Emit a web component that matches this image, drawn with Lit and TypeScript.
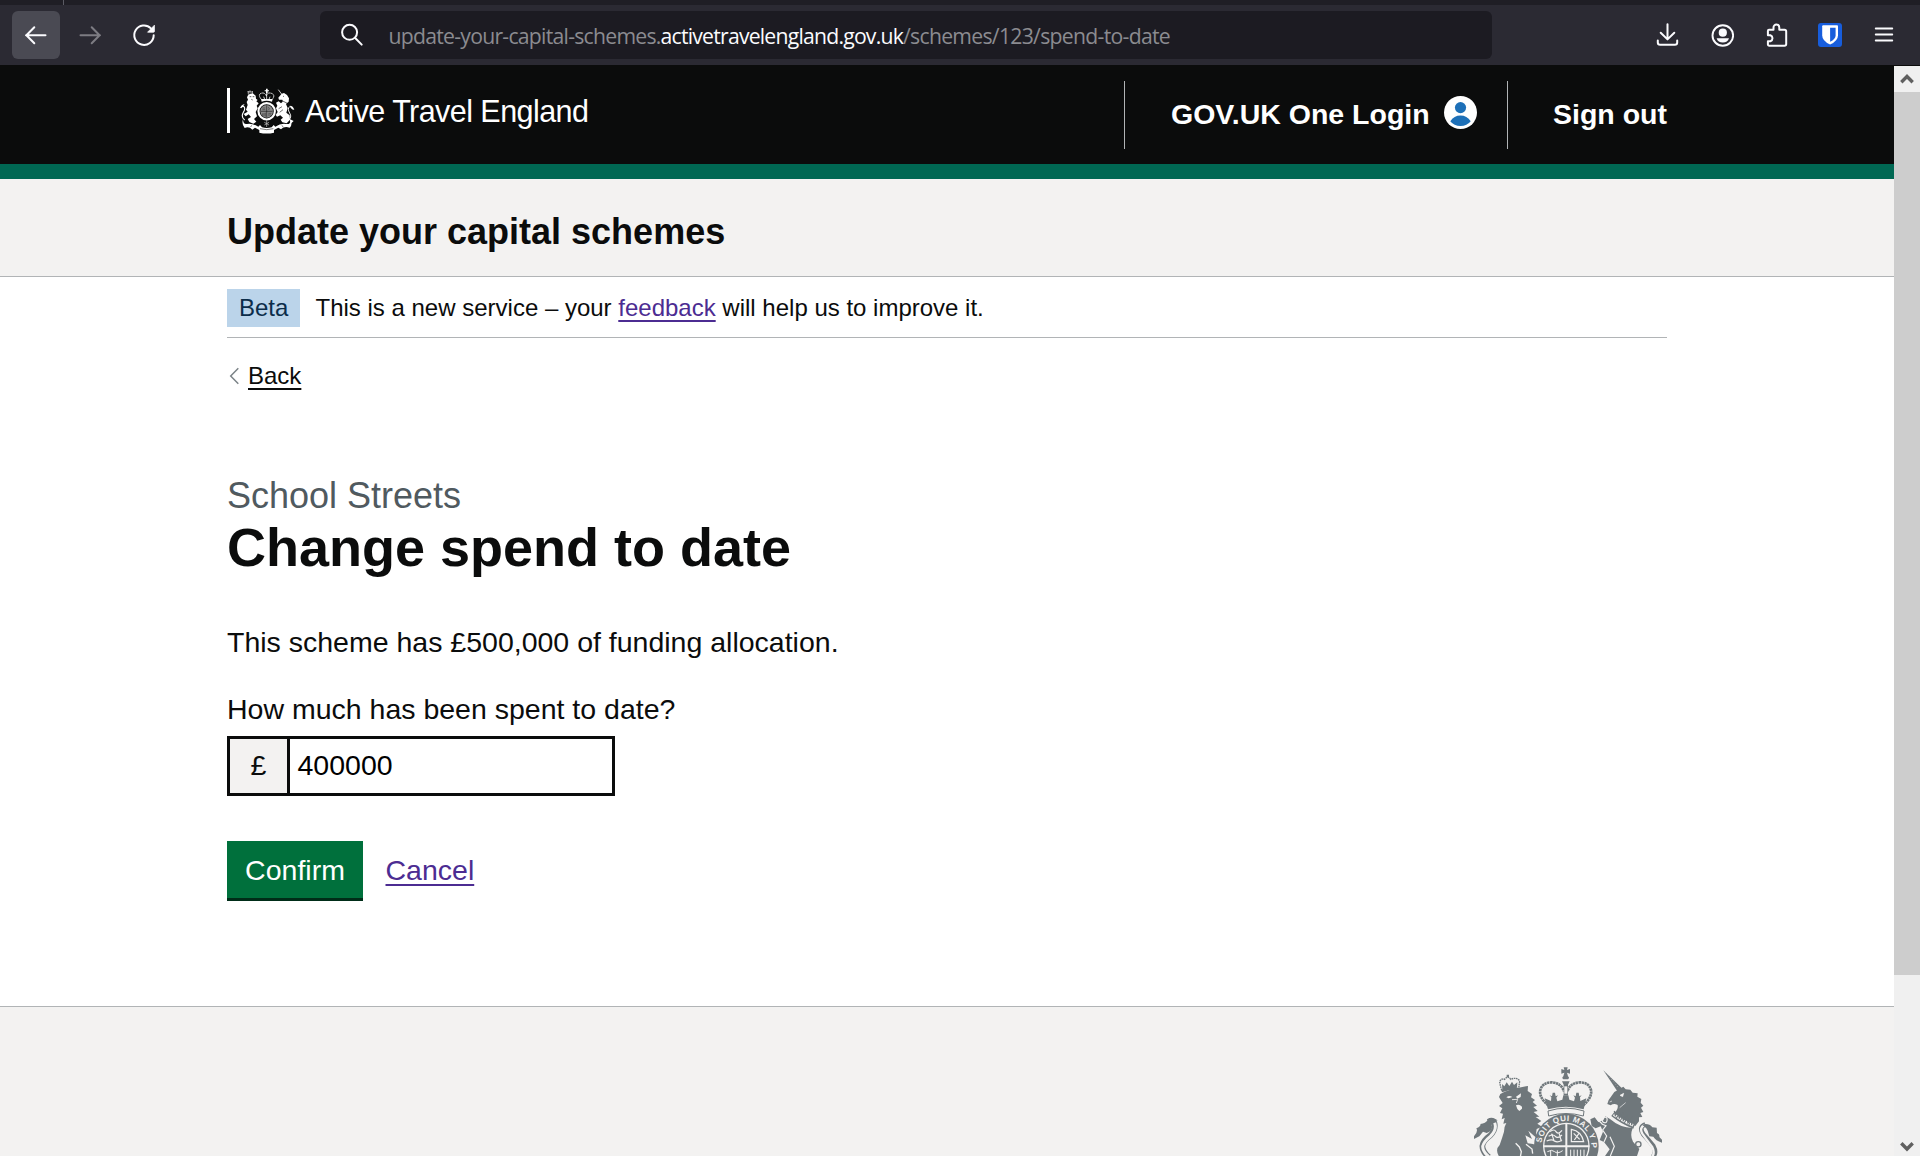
import { LitElement, html, css, svg } from "lit";
import { customElement, property } from "lit/decorators.js";

const line = (d: string) =>
  svg`<path d=${d} fill="none" stroke="currentColor" stroke-width="2" stroke-linecap="round" stroke-linejoin="round"></path>`;

const ICONS: Record<string, unknown> = {
  back: line("M2 12.3H21.5M10.3 4.3L2.4 12.3L10.3 20.3"),
  forward: line("M2.5 12.3H22M13.7 4.3L21.6 12.3L13.7 20.3"),
  reload: svg`<path d="M18.9 5.4A9.7 9.7 0 1 0 21.7 12.3" fill="none" stroke="currentColor" stroke-width="2" stroke-linecap="round"></path>
    <path d="M22.4 2.2V8.4a.8.8 0 0 1-.8.8H15.6Z" fill="currentColor" stroke="currentColor" stroke-width=".8" stroke-linejoin="round"></path>`,
  search: svg`<circle cx="9.6" cy="9.3" r="7.5" fill="none" stroke="currentColor" stroke-width="2"></circle>${line("M15.2 15L21.7 21.6")}`,
  download: line("M11.5 1.2V16M4.7 9.8L11.5 16.4L18.3 9.8M1.8 17.5V19.5Q1.8 21.8 4.1 21.8H18.9Q21.2 21.8 21.2 19.5V17.5"),
  account: svg`<circle cx="12.8" cy="12.5" r="10.3" fill="none" stroke="currentColor" stroke-width="1.9"></circle>
    <circle cx="12.8" cy="9.7" r="4.1" fill="currentColor"></circle>
    <path d="M6.6 15.2H19Q17.6 19.6 12.8 19.6T6.6 15.2Z" fill="currentColor"></path>`,
  puzzle: line("M3.9 11.3V7.9Q3.9 6.8 5 6.8H9.5V4.4A2.9 2.9 0 0 1 15.3 4.4V6.8H20.5Q22.2 6.8 22.2 8.5V21Q22.2 22.7 20.5 22.7H5Q3.9 22.7 3.9 21.6V18.2H6.4A3.2 3.2 0 0 0 6.4 12.2H3.9Z"),
  shield: svg`<rect x="0" y="0" width="24" height="24" rx="3" fill="#175ddc"></rect>
    <path d="M4.2 3.2Q4.2 2.3 5.1 2.3H19.1Q20 2.3 20 3.2V12.4Q20 17.6 12.1 21.6Q4.2 17.6 4.2 12.4Z" fill="#fff"></path>
    <path d="M12.1 4.8H17.6V12.4Q17.6 15.9 12.1 18.8Z" fill="#175ddc"></path>`,
  menu: svg`<path d="M3.8 5.5H20.2M3.8 11.5H20.2M3.8 17.6H20.2" stroke="currentColor" stroke-width="2" stroke-linecap="round"></path>`,
};

@customElement("tool-icon")
export class ToolIcon extends LitElement {
  @property() name = "menu";
  static styles = css`
    :host { display: flex; width: 48px; height: 48px; align-items: center; justify-content: center; border-radius: 6px; flex: none; }
    svg { width: 24px; height: 24px; display: block; }
  `;
  render() {
    return html`<svg viewBox="0 0 24 24">${ICONS[this.name]}</svg>`;
  }
}

@customElement("browser-bar")
export class BrowserBar extends LitElement {
  static styles = css`
    :host { display: block; color: #fbfbfe; }
    .tabs { height: 5px; background: #1f1e25; display: flex; }
    .tabsep { width: 1px; height: 5px; margin-left: 63px; background: #5b5b64; }
    .bar { height: 60px; box-sizing: border-box; padding: 0 12px; background: #2b2a33; display: flex; gap: 6px; align-items: center; }
    .on { background: #4a4a53; }
    .off { color: #7d7c83; }
    .url { width: 1172px; height: 48px; margin-left: 146px; border-radius: 6px; background: #1c1b22; display: flex; align-items: center; box-sizing: border-box; padding-left: 7.5px; }
    .addr { display: flex; margin: 2px 0 0 13px; color: #8b8b90; font: 21.2px/30px "Open Sans", "Noto Sans", sans-serif; white-space: pre; }
    .dim { letter-spacing: -0.74px; }
    .host { color: #fbfbfe; letter-spacing: -0.78px; }
    .tail { letter-spacing: -0.71px; }
    .tools { margin-left: auto; display: flex; gap: 6px; }
  `;
  render() {
    return html`
      <div class="tabs"><div class="tabsep"></div></div>
      <div class="bar">
        <tool-icon class="on" name="back"></tool-icon>
        <tool-icon class="off" name="forward"></tool-icon>
        <tool-icon name="reload"></tool-icon>
        <div class="url">
          <tool-icon name="search"></tool-icon>
          <div class="addr"><span class="dim">update-your-capital-schemes.</span><span class="host">activetravelengland.gov.uk</span><span class="tail">/schemes/123/spend-to-date</span></div>
        </div>
        <div class="tools">
          ${["download", "account", "puzzle", "shield", "menu"].map((n) => html`<tool-icon name=${n}></tool-icon>`)}
        </div>
      </div>
    `;
  }
}

@customElement("small-crest")
export class SmallCrest extends LitElement {
  static styles = css`
    :host { display: block; width: 55px; height: 46px; }
    svg { display: block; width: 55px; height: 46px; }
  `;
  render() {
    return html`<svg viewBox="90 52 165 138" fill="#fff">
      <path d="M168 54h5v5h4v3h-4v5h-5v-5h-4v-3h4z"></path>
      <path d="M154 86Q143 72 153 68Q164 64 169 76Q172 64 184 68Q197 72 187 86" fill="none" stroke="#fff" stroke-width="3" stroke-dasharray="3.5 1"></path>
      <path d="M170 67V86M161 78l3 8M180 78l-3 8" stroke="#fff" stroke-width="2.4"></path>
      <path d="M153 85H188L186 93Q170 88 155 93Z"></path>
      <circle cx="170" cy="122" r="24.5" fill="#0b0c0c" stroke="#fff" stroke-width="6.5"></circle>
      <circle cx="170" cy="122" r="19" fill="#8a8a8a"></circle>
      <path d="M170 104V140M152 122H188" stroke="#0b0c0c" stroke-width="1.6"></path>
      <path d="M157 112h9M157 117h9M174 110q7 2 2 8M158 128v8M162 127v10M166 126v12M175 128h9M174 133h9" stroke="#2a2a2a" stroke-width="1.6" fill="none"></path>
      <path d="M114 61l3 5 3-6 3 6 4-5 1 9-13 1z" fill="none" stroke="#fff" stroke-width="1.8"></path>
      <path d="M114 74Q120 68 130 69L137 75L138 84L143 88L139 92L146 98L140 105L143 113L137 124L141 137L132 145L139 153L130 159L118 154L113 145L123 139L116 131L107 137L101 130L113 123L108 117L113 103L110 94L114 87L111 80Z"></path>
      <path d="M119 78h5M128 78h5M124 86l4 2" stroke="#0b0c0c" stroke-width="2"></path>
      <path d="M104 148Q92 139 100 125Q107 115 102 108Q97 105 92 112" fill="none" stroke="#fff" stroke-width="3.4"></path>
      <path d="M91 112Q94 101 104 101Q99 110 91 112Z"></path>
      <path d="M205 57L216 72" stroke="#fff" stroke-width="2.4"></path>
      <path d="M215 69L222 67L231 73L237 83L236 93L228 100L233 112L229 126L239 134L240 147L230 158L217 155L212 147L219 141L211 134L201 138L197 133L203 124L198 113L202 105L198 96L206 92L213 98L218 93L217 87L207 87L205 81Z"></path>
      <path d="M216 90L234 99M219 77h3M206 114l10-6M209 125l10-8" stroke="#0b0c0c" stroke-width="1.8"></path>
      <path d="M235 149Q247 140 239 127Q231 114 239 108Q246 107 248 116" fill="none" stroke="#fff" stroke-width="2.8"></path>
      <path d="M239 105Q250 105 253 118Q243 115 239 105ZM239 145L251 151L242 159Z"></path>
      <path d="M170 149v20M163 155l14 8M177 155l-14 8" stroke="#bbb" stroke-width="2.2"></path>
      <path d="M99 146Q99 162 111 160Q127 157 145 168L150 163L156 170Q170 174 185 170L191 163L196 168Q212 157 229 160Q242 162 242 147Q248 165 239 171Q222 166 213 176L205 171L192 178V186Q170 191 148 186V178L135 171L127 177Q117 166 104 172Q94 160 99 146Z"></path>
      <path d="M150 174Q170 180 190 174M125 164l-3 5M216 164l3 5" stroke="#0b0c0c" stroke-width="1.6" fill="none"></path>
    </svg>`;
  }
}

@customElement("large-crest")
export class LargeCrest extends LitElement {
  static styles = css`
    :host { display: block; width: 188px; height: 90px; }
    svg { display: block; width: 188px; height: 90px; }
    text { font-family: "Liberation Sans", Arial, sans-serif; font-weight: 700; font-size: 24px; }
  `;
  render() {
    const g = "#6f777b";
    const l = "#f3f2f1";
    return html`<svg viewBox="72 230 564 270" fill=${g}>
      <!-- crown -->
      <path d="M341 231h12l-2 8 9-3v14l-9-3 3 11q6 4 0 9h-14q-6-5 0-9l3-11-9 3v-14l9 3z"></path>
      <path d="M295 345Q266 321 271 299Q277 277 305 276Q334 278 342 303M400 345Q427 321 423 299Q417 277 390 276Q360 278 352 303" fill="none" stroke=${g} stroke-width="8" stroke-dasharray="7 1.5"></path>
      <path d="M336 273h23l-5 10v32h-13v-32z"></path>
      <path d="M343 288h9v22h-9z" fill=${l}></path>
      <path d="M284 324L303 332L304 321L299 315L306 318L308 307L315 307L317 318L324 315L319 322L322 333L337 328L340 315H355L358 328L372 333L375 322L370 315L377 318L379 307L386 307L388 318L395 315L390 321L391 332L409 324L401 357Q348 341 294 357Z"></path>
      <path d="M294 362Q348 345 402 362L400 377Q348 362 296 377Z" fill=${l} stroke=${g} stroke-width="3"></path>
      <!-- garter -->
      <circle cx="349" cy="467" r="97"></circle>
      <circle cx="349" cy="467" r="70" fill=${l}></circle>
      <circle cx="349" cy="467" r="66"></circle>
      <path id="garter" d="M274 467A75 75 0 0 1 424 467V530" fill="none"></path>
      <path d="M346 400h6v65h66v6H352v30h-6v-30H280v-6h66z" fill=${l}></path>
      <path d="M300 424q12-10 18 0t18-4M296 438q14-8 20 0t20-4M290 452q16-7 24 0t22-3M305 430l8 24M327 427l7 26" fill="none" stroke=${l} stroke-width="3.5"></path>
      <path d="M364 417Q394 422 401 454H364ZM371 429l18 18M387 429l-14 20" fill="none" stroke=${l} stroke-width="3.5"></path>
      <path d="M292 484q14-8 22 0t24-3M302 480v20M322 480v20M362 478v22M372 478v22M382 478v22M392 478v22M402 478v20" fill="none" stroke=${l} stroke-width="3"></path>
      <text fill=${l} textLength="232" lengthAdjust="spacing"><textPath href="#garter" startOffset="9">SOIT QUI MAL Y P</textPath></text>
      <!-- lion -->
      <path d="M155 300Q150 283 149 274Q154 263 164 267Q174 254 182 267Q200 259 209 272L206 295" fill="none" stroke=${g} stroke-width="4" stroke-dasharray="5 2"></path>
      <path d="M170 253h7v8h-7zM156 281l7 7 7-12 8 11 8-13 6 10 10-8-1 16-44 8z"></path>
      <path d="M154 299Q180 287 208 293L209 299Q180 295 156 306Z"></path>
      <path d="M151 311Q174 297 234 287L233 302L246 311L243 321L255 329L248 335L261 346L250 350L263 362L251 365L268 379L257 380L274 392L262 400L276 409L260 416L258 430L266 447Q252 437 235 421L246 446L226 435L233 459L249 461Q269 467 275 483L272 500H148Q134 478 149 464Q157 441 162 424Q162 409 169 398L160 400L164 383L155 387L159 370L150 368L157 354L147 347L158 338L151 327L147 320Z"></path>
      <path d="M169 321Q178 314 187 320L176 324ZM198 319L213 309L212 320L202 325ZM198 345Q207 340 216 349L216 355L208 362L202 356Z" fill=${l}></path>
      <path d="M186 328L203 327L199 338" fill="none" stroke=${l} stroke-width="2.5"></path>
      <path d="M197 459L208 470L214 484L211 500M228 462l18 14 2 14" fill="none" stroke=${l} stroke-width="4"></path>
      <path d="M117 500Q98 486 97 467Q99 451 120 436Q139 417 133 397Q127 387 115 394" fill="none" stroke=${g} stroke-width="17"></path>
      <path d="M117 500Q98 484 98 468Q101 454 121 438Q142 418 134 397" fill="none" stroke=${l} stroke-width="9"></path>
      <path d="M72 438Q85 423 79 414Q94 407 91 401Q107 399 113 389Q130 380 143 390Q130 393 125 404Q130 421 110 428L99 424L88 438L70 447Z"></path>
      <!-- unicorn -->
      <path d="M460 240L516 294L503 304Z"></path>
      <path d="M467 246L506 293" stroke=${l} stroke-width="1.2" stroke-dasharray="3 6"></path>
      <path d="M493 305L520 289L527 297L541 298L548 307L563 309L562 319L574 326L572 337L580 346L573 352L580 365L571 368L577 380L567 381L567 393L556 407Q522 391 492 369Q506 357 503 344Q492 337 482 345L472 341L476 329Z"></path>
      <path d="M510 315l11-6-3 10zM479 335l7-3M509 352l18-15" fill=${l} stroke=${l} stroke-width="2"></path>
      <path d="M489 370Q521 395 553 407" fill="none" stroke=${g} stroke-width="17"></path>
      <path d="M491 372Q521 394 550 405" fill="none" stroke=${l} stroke-width="8" stroke-dasharray="11 3"></path>
      <path d="M493 362l3 13 8-11 4 19 10-13 2 20 11-12 3 19 12-13-1 21" fill="none" stroke=${g} stroke-width="4"></path>
      <path d="M480 386Q510 412 548 413Q539 437 549 454L568 476L560 500H463L479 477L462 455L449 449L459 424L452 408L437 414L425 407L421 387L434 381L445 395L460 390L466 378Z"></path>
      <path d="M441 386l16 15M463 380q10 0 8 11t-13 3q-5-10 5-14zM455 401l13 5-10 13 12 18-8 18M480 439l13 29-12 29" fill="none" stroke=${l} stroke-width="3.5"></path>
      <circle cx="565" cy="462" r="8" fill=${l} stroke=${g} stroke-width="4"></circle>
      <path d="M608 500Q621 487 610 467Q595 448 580 432Q565 410 586 402" fill="none" stroke=${g} stroke-width="14"></path>
      <path d="M606 500Q616 487 606 469Q590 449 577 430Q567 412 584 403" fill="none" stroke=${l} stroke-width="7"></path>
      <path d="M576 403Q596 397 607 411L620 412L621 428Q630 432 628 440L638 450V458Q617 451 610 439L598 438L593 421Q589 411 576 403Z"></path>
    </svg>`;
  }
}

@customElement("page-scrollbar")
export class PageScrollbar extends LitElement {
  static styles = css`
    :host { display: flex; flex-direction: column; width: 26px; background: #f0f0f0; border-top: 1px solid #0b0c0c; box-sizing: border-box; }
    .arrow { height: 26px; display: flex; align-items: center; justify-content: center; flex: none; }
    .thumb { height: 883px; background: #cdcdcd; }
    .down { margin-top: auto; height: 16px; align-items: flex-start; }
    svg { width: 14px; height: 12px; display: block; }
  `;
  render() {
    return html`
      <div class="arrow"><svg viewBox="0 0 14 12"><path d="M1.3 9.2L7 3.5L12.7 9.2" fill="none" stroke="#606060" stroke-width="3.4"></path></svg></div>
      <div class="thumb"></div>
      <div class="arrow down"><svg viewBox="0 0 14 12"><path d="M1.3 3.3L7 9L12.7 3.3" fill="none" stroke="#606060" stroke-width="3.4"></path></svg></div>
    `;
  }
}

@customElement("app-root")
export class AppRoot extends LitElement {
  static styles = css`
    :host { display: flex; flex-direction: column; width: 1920px; height: 1156px; overflow: hidden; background: #fff; color: #0b0c0c; font-family: "Liberation Sans", Arial, sans-serif; font-size: 28.5px; line-height: 37.5px; }
    .view { display: flex; flex: 1; min-height: 0; }
    .page { width: 1894px; overflow: hidden; display: flex; flex-direction: column; }
    page-scrollbar { flex: none; }
    .header { height: 114px; box-sizing: border-box; background: #0b0c0c; border-bottom: 15px solid #006853; color: #fff; flex: none; }
    .wrap { width: 1440px; margin: 0 auto; }
    .header .wrap { display: flex; justify-content: space-between; }
    .org { display: flex; height: 45px; margin-top: 23px; border-left: 3px solid #fff; padding-left: 10px; }
    .orgname { margin-left: 10px; font-size: 30.5px; line-height: 36px; padding-top: 5px; letter-spacing: -0.55px; white-space: nowrap; }
    .nav { display: flex; margin-top: 16px; font-weight: 700; }
    .item { height: 68px; border-left: 1px solid #b1b4b6; padding-left: 45px; display: flex; align-items: center; box-sizing: border-box; }
    .login { width: 383px; padding-left: 46px; }
    .avatar { width: 33px; height: 33px; margin: -5px 0 0 14px; }
    .service { height: 98px; box-sizing: border-box; background: #f3f2f1; border-bottom: 1px solid #b1b4b6; padding-top: 30px; font-size: 36px; font-weight: 700; line-height: 45px; flex: none; }
    .phase { height: 61px; box-sizing: border-box; padding-top: 12px; border-bottom: 1px solid #b1b4b6; display: flex; align-items: flex-start; font-size: 24px; line-height: 30px; }
    .tag { background: #bbd4ea; color: #0c2d4a; height: 38px; line-height: 37px; padding: 0 12px; width: 49px; margin-right: 15.5px; }
    .phase p { margin: 0; padding-top: 4px; }
    a { color: #4c2c92; text-decoration: underline; text-decoration-thickness: 2px; text-underline-offset: 4px; text-decoration-skip-ink: none; }
    .backrow { display: flex; align-items: center; margin-top: 23px; height: 30px; font-size: 24px; line-height: 30px; }
    .backrow svg { width: 11px; height: 18px; margin: 0 8px 0 2px; }
    .backrow a { color: #0b0c0c; }
    .caption { margin-top: 82px; color: #505a5f; font-size: 36px; line-height: 45px; }
    h1 { margin: -1px 0 0; font-size: 54px; line-height: 60px; font-weight: 700; }
    .lead { margin: 47px 0 29px; }
    .label { display: block; margin-bottom: 8px; }
    .field { display: flex; width: 388px; height: 60px; box-sizing: border-box; border: 3px solid #0b0c0c; line-height: 52px; }
    .prefix { width: 57px; text-align: center; background: #f3f2f1; border-right: 3px solid #0b0c0c; }
    .value { padding-left: 7.5px; color: #000; }
    .actions { display: flex; margin-top: 45px; }
    .confirm { width: 136px; height: 57px; line-height: 59px; background: #00703c; box-shadow: 0 3px 0 #002d18; color: #fff; text-align: center; margin-right: 22.5px; }
    .actions a { line-height: 59px; }
    .footer { margin-top: auto; height: 150px; box-sizing: border-box; background: #f3f2f1; border-top: 1px solid #b1b4b6; padding-top: 60px; flex: none; }
    .footer .wrap { display: flex; justify-content: flex-end; box-sizing: border-box; padding-right: 5px; }
  `;
  render() {
    return html`
      <browser-bar></browser-bar>
      <div class="view">
        <div class="page">
          <div class="header">
            <div class="wrap">
              <div class="org"><small-crest></small-crest><span class="orgname">Active Travel England</span></div>
              <div class="nav">
                <div class="item login">GOV.UK One Login
                  <svg class="avatar" viewBox="0 0 33 33"><circle cx="16.5" cy="16.5" r="16.5" fill="#fff"></circle><circle cx="16.5" cy="11.6" r="5.6" fill="#1d70b8"></circle><path d="M6.3 25.2Q10 19.4 16.5 19.4T26.7 25.2Q23 30 16.5 30T6.3 25.2Z" fill="#1d70b8"></path></svg>
                </div>
                <div class="item">Sign out</div>
              </div>
            </div>
          </div>
          <div class="service"><div class="wrap">Update your capital schemes</div></div>
          <div class="wrap">
            <div class="phase">
              <span class="tag">Beta</span>
              <p>This is a new service – your <a>feedback</a> will help us to improve it.</p>
            </div>
            <div class="backrow">
              <svg viewBox="0 0 11 18"><path d="M9.3 1.2L1.7 9L9.3 16.8" fill="none" stroke="#7b8387" stroke-width="1.5"></path></svg>
              <a>Back</a>
            </div>
            <div class="caption">School Streets</div>
            <h1>Change spend to date</h1>
            <p class="lead">This scheme has £500,000 of funding allocation.</p>
            <span class="label">How much has been spent to date?</span>
            <div class="field"><span class="prefix">£</span><span class="value">400000</span></div>
            <div class="actions"><span class="confirm">Confirm</span><a>Cancel</a></div>
          </div>
          <div class="footer"><div class="wrap"><large-crest></large-crest></div></div>
        </div>
        <page-scrollbar></page-scrollbar>
      </div>
    `;
  }
}
